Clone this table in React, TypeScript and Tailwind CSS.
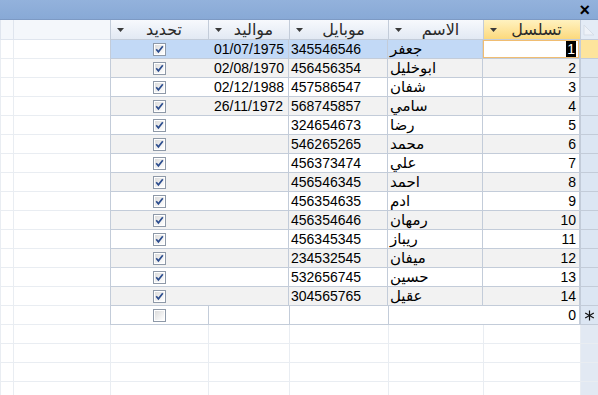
import React from 'react';

type Person = { id: number; name: string; mobile: string; dob: string };

const people: Person[] = [
  { id: 1, name: 'جعفر', mobile: '345546546', dob: '01/07/1975' },
  { id: 2, name: 'ابوخليل', mobile: '456456354', dob: '02/08/1970' },
  { id: 3, name: 'شفان', mobile: '457586547', dob: '02/12/1988' },
  { id: 4, name: 'سامي', mobile: '568745857', dob: '26/11/1972' },
  { id: 5, name: 'رضا', mobile: '324654673', dob: '' },
  { id: 6, name: 'محمد', mobile: '546265265', dob: '' },
  { id: 7, name: 'علي', mobile: '456373474', dob: '' },
  { id: 8, name: 'احمد', mobile: '456546345', dob: '' },
  { id: 9, name: 'ادم', mobile: '456354635', dob: '' },
  { id: 10, name: 'رمهان', mobile: '456354646', dob: '' },
  { id: 11, name: 'ريباز', mobile: '456345345', dob: '' },
  { id: 12, name: 'ميفان', mobile: '234532545', dob: '' },
  { id: 13, name: 'حسين', mobile: '532656745', dob: '' },
  { id: 14, name: 'عقيل', mobile: '304565765', dob: '' },
];

const grid = 'grid grid-cols-[18px_97px_95px_99px_81px_98px_97px_13px]';
const cell = 'h-[19px] border-b border-e border-[#c3ccd9] overflow-hidden whitespace-nowrap leading-[18px]';
const faint = 'h-[19px] border-b border-e border-[#e9edf2]';

const Arrow = () => (
  <svg width="7" height="4" viewBox="0 0 7 4" className="shrink-0">
    <path d="M0 0 L7 0 L3.5 4 Z" fill="#3a3a3a" />
  </svg>
);

const CheckBox = ({ checked }: { checked: boolean }) => (
  <svg width="13" height="13" viewBox="0 0 13 13">
    <defs>
      <linearGradient id="cbg" x1="0" y1="0" x2="1" y2="1">
        <stop offset="0" stopColor="#dcdcdc" />
        <stop offset="1" stopColor="#ffffff" />
      </linearGradient>
    </defs>
    <rect x="0.5" y="0.5" width="12" height="12" fill="#fff" stroke="#8e99a8" />
    <rect x="2" y="2" width="9" height="9" fill="url(#cbg)" />
    {checked && <path d="M3.2 6.2 L5.4 8.8 L9.8 3.2" fill="none" stroke="#2c4d8e" strokeWidth="1.7" />}
  </svg>
);

const Star = () => (
  <svg width="11" height="11" viewBox="0 0 11 11">
    <g stroke="#111" strokeWidth="1.2">
      <line x1="5.5" y1="0.5" x2="5.5" y2="10.5" />
      <line x1="1.2" y1="3" x2="9.8" y2="8" />
      <line x1="1.2" y1="8" x2="9.8" y2="3" />
    </g>
  </svg>
);

const HeaderCell = ({ label, selected }: { label: string; selected?: boolean }) => (
  <div
    className={`h-[20px] border-b border-e border-[#c3ccd9] flex items-center ps-[4px] pe-[6px] ${
      selected ? 'bg-gradient-to-b from-[#fff2c0] to-[#fcd97c]' : 'bg-gradient-to-b from-[#f7f9fd] to-[#e2e9f3]'
    }`}
  >
    <span className="flex-1 text-center text-[16px] leading-[18px] text-[#2a2a2a]">{label}</span>
    <Arrow />
  </div>
);

const Row = ({ p, index }: { p: Person; index: number }) => {
  const active = index === 0;
  const bg = active ? 'bg-[#c2d9f6]' : index % 2 === 1 ? 'bg-[#f2f2f2]' : 'bg-white';
  return (
    <div className={grid}>
      <div className={`${cell} ${active ? 'bg-[#fde49c]' : 'bg-[#dce6f3]'}`} />
      <div
        className={`${cell} text-right pe-[3px] ${
          active ? 'bg-white shadow-[inset_0_0_0_1px_#f0bd72]' : bg
        }`}
        dir="ltr"
      >
        {active ? <span className="bg-black text-white px-[1px]">{p.id}</span> : p.id}
      </div>
      <div className={`${cell} ${bg} text-left ps-[2px] text-[15px]`} dir="ltr">
        <span dir="rtl">{p.name}</span>
      </div>
      <div className={`${cell} ${bg} text-left ps-[2px]`} dir="ltr">{p.mobile}</div>
      <div className={`${cell} ${bg} text-left ps-[6px]`} dir="ltr">{p.dob}</div>
      <div className={`${cell} ${bg} flex items-center justify-center`}>
        <CheckBox checked />
      </div>
      <div className={`${faint} bg-white`} />
      <div className={`${faint} bg-white`} />
    </div>
  );
};

const App: React.FC = () => {
  return (
    <div
      className="w-[598px] h-[395px] overflow-hidden bg-white text-black text-[14px]"
      style={{ fontFamily: '"Liberation Sans", "DejaVu Sans", sans-serif' }}
    >
      <div className="h-[20px] bg-gradient-to-b from-[#93b2dc] to-[#88a9d6] border-b border-[#7d9ac4] flex items-center justify-end pr-[8px]">
        <span className="text-[18px] font-bold leading-none text-black">×</span>
      </div>

      <div dir="rtl">
        <div className={grid}>
          <div className="h-[20px] border-b border-e border-[#c3ccd9] bg-[#e4ecf6] relative overflow-hidden">
            <svg width="18" height="20" viewBox="0 0 18 20" className="absolute inset-0">
              <path d="M4 5 L14 15 L4 15 Z" fill="#eef2f8" stroke="#d6dde7" />
            </svg>
          </div>
          <HeaderCell label="تسلسل" selected />
          <HeaderCell label="الاسم" />
          <HeaderCell label="موبايل" />
          <HeaderCell label="مواليد" />
          <HeaderCell label="تحديد" />
          <div className="h-[20px] border-b border-e border-[#dfe5ee] bg-[#f4f7fb]" />
          <div className="h-[20px] border-b border-e border-[#dfe5ee] bg-[#f4f7fb]" />
        </div>

        {people.map((p, i) => (
          <Row key={p.id} p={p} index={i} />
        ))}

        <div className={grid}>
          <div className={`${cell} bg-[#dce6f3] flex items-center justify-center`}>
            <Star />
          </div>
          <div className={`${cell} bg-white text-right pe-[3px]`} dir="ltr">0</div>
          <div className={`${cell} bg-white`} />
          <div className={`${cell} bg-white`} />
          <div className={`${cell} bg-white`} />
          <div className={`${cell} bg-white flex items-center justify-center`}>
            <CheckBox checked={false} />
          </div>
          <div className={`${faint} bg-white`} />
          <div className={`${faint} bg-white`} />
        </div>

        {[0, 1, 2, 3].map((r) => (
          <div key={r} className={grid}>
            <div className={`${faint} bg-[#e2e9f3] border-[#d3dce8]`} />
            <div className={faint} />
            <div className={faint} />
            <div className={faint} />
            <div className={faint} />
            <div className={faint} />
            <div className={faint} />
            <div className={faint} />
          </div>
        ))}
      </div>
    </div>
  );
};

export default App;
